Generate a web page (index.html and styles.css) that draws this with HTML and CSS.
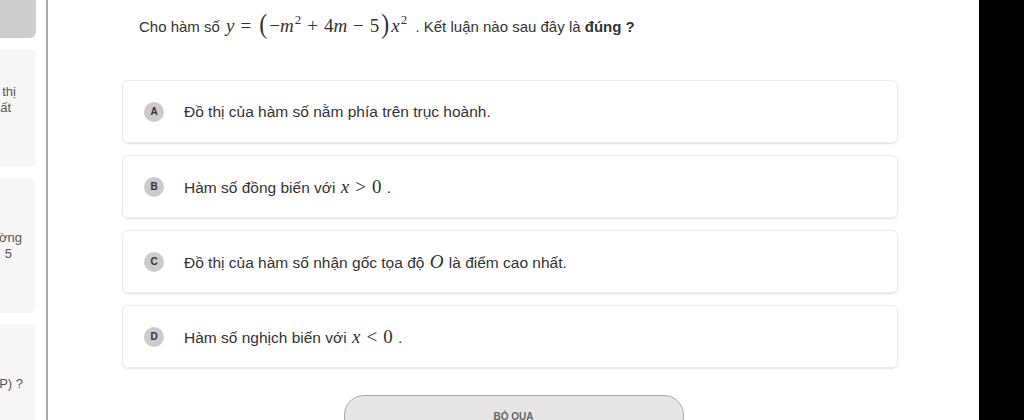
FILE: index.html
```html
<!DOCTYPE html>
<html lang="vi">
<head>
    <meta charset="UTF-8">
    <title>Câu hỏi</title>
    <link rel="stylesheet" href="styles.css">
</head>
<body>

<div class="page">
    <aside class="sidebar">
        <div class="side-track">
            <div class="side-card side-card-active"></div>
            <div class="side-card side-card-1">
                <span class="l1">Đồ thị</span>
                <span class="l2">cao nhất</span>
            </div>
            <div class="side-card side-card-2">
                <span class="l1">đường</span>
                <span class="l2">5</span>
            </div>
            <div class="side-card side-card-3">
                <span class="l1">(P) ?</span>
            </div>
        </div>
    </aside>

    <main class="main">
        <p class="question">
            Cho hàm số
            <span class="math q-math"><i>y</i><span class="op">=</span><span class="paren">(</span>−<i>m</i><sup>2</sup><span class="op">+</span>4<i>m</i><span class="op">−</span>5<span class="paren">)</span><i>x</i><sup>2</sup></span>
            . Kết luận nào sau đây là <b>đúng ?</b>
        </p>

        <div class="options">
            <div class="option">
                <span class="badge">A</span>
                <span class="option-text">Đồ thị của hàm số nằm phía trên trục hoành.</span>
            </div>
            <div class="option">
                <span class="badge">B</span>
                <span class="option-text">Hàm số đồng biến với <span class="math"><i>x</i><span class="op">&gt;</span>0</span> .</span>
            </div>
            <div class="option">
                <span class="badge">C</span>
                <span class="option-text">Đồ thị của hàm số nhận gốc tọa độ <span class="math"><i>O</i></span> là điểm cao nhất.</span>
            </div>
            <div class="option">
                <span class="badge">D</span>
                <span class="option-text">Hàm số nghịch biến với <span class="math"><i>x</i><span class="op">&lt;</span>0</span> .</span>
            </div>
        </div>

        <div class="actions">
            <button type="button" class="skip-btn">Bỏ qua</button>
        </div>
    </main>

    <div class="black-edge"></div>
</div>

</body>
</html>
```

FILE: styles.css
```css
body {
    margin: 0;
    font-family: "Liberation Sans", Arial, sans-serif;
    color: #333;
    background-color: #fff;
}
.page {
    display: flex;
    height: 420px;
    overflow: hidden;
}
.sidebar {
    width: 36px;
    flex-shrink: 0;
    overflow: hidden;
    display: flex;
    justify-content: flex-end;
    margin-right: 10px;
}
.side-track {
    width: 200px;
    flex-shrink: 0;
    display: flex;
    flex-direction: column;
    gap: 11px;
}
.side-card {
    flex-shrink: 0;
    box-sizing: border-box;
    background-color: #f7f7f7;
    border-radius: 6px;
    display: flex;
    flex-direction: column;
    justify-content: flex-start;
    font-size: 13px;
    line-height: 16px;
    color: #555;
}
.side-card span {
    text-align: right;
}
.side-card-active {
    height: 38px;
    background-color: #cdcdcd;
    border-radius: 0 0 6px 6px;
}
.side-card-1 {
    height: 118px;
    padding-top: 35px;
}
.side-card-1 .l1 { padding-right: 20px; }
.side-card-1 .l2 { padding-right: 25px; }
.side-card-2 {
    height: 135px;
    padding-top: 52px;
}
.side-card-2 .l1 { padding-right: 14px; }
.side-card-2 .l2 { padding-right: 24px; }
.side-card-3 {
    height: 130px;
    padding-top: 52px;
}
.side-card-3 .l1 { padding-right: 13px; }
.main {
    flex: 1;
    border-left: 2px solid #a9a9a9;
    padding-left: 74px;
    padding-right: 81px;
}
.question {
    margin: 15px 0 0 17px;
    font-size: 15px;
    line-height: 20px;
    height: 22px;
}
.math {
    font-family: "Liberation Serif", "Times New Roman", serif;
    font-size: 19px;
    white-space: nowrap;
}
.q-math {
    margin: 0 4px 0 2px;
}
.math i {
    font-style: italic;
}
.math sup {
    font-size: 13px;
    line-height: 0;
    vertical-align: 8px;
    margin-left: 1px;
}
.math .op {
    margin: 0 6px;
}
.math .paren {
    display: inline-block;
    font-size: 24px;
    line-height: 18px;
    transform: scaleY(1.1);
    margin: 0 2px;
}
.options {
    margin-top: 43px;
    display: flex;
    flex-direction: column;
    gap: 12px;
}
.option {
    height: 61px;
    border: 1px solid #ececec;
    border-radius: 6px;
    box-shadow: 0 1px 2px rgba(0, 0, 0, 0.12);
    display: flex;
    align-items: center;
    padding-left: 21px;
    font-size: 15.5px;
}
.badge {
    width: 20px;
    height: 20px;
    border-radius: 50%;
    background-color: #cbcbcb;
    font-size: 10px;
    font-weight: bold;
    color: #333;
    display: flex;
    align-items: center;
    justify-content: center;
    margin-right: 20px;
    flex-shrink: 0;
}
.option-text .math {
    margin: 0 1px;
}
.actions {
    display: flex;
    justify-content: center;
    margin-top: 27px;
    padding-left: 7px;
}
.skip-btn {
    width: 340px;
    height: 44px;
    border: 1px solid #a9a9a9;
    border-radius: 20px;
    background-color: #e6e6e6;
    color: #666;
    font-family: "Liberation Sans", Arial, sans-serif;
    font-size: 10px;
    font-weight: bold;
    text-transform: uppercase;
    display: flex;
    justify-content: center;
    padding-top: 15px;
}
.black-edge {
    width: 45px;
    flex-shrink: 0;
    background-color: #000;
}
```
